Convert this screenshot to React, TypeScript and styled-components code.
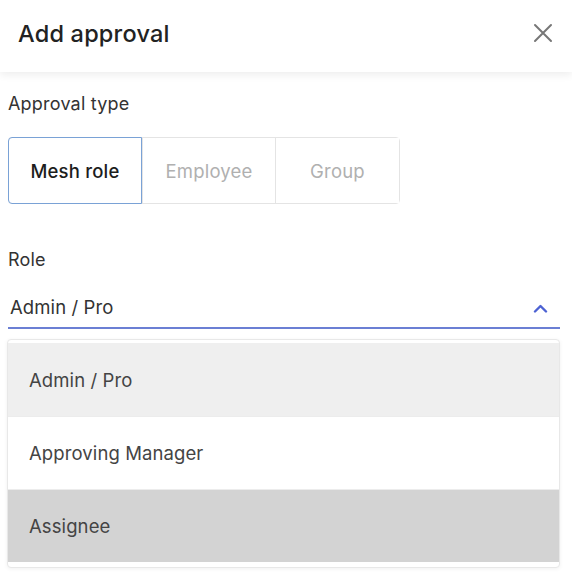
import React, { useState } from "react";
import styled, { createGlobalStyle } from "styled-components";

const GlobalStyle = createGlobalStyle`
  html, body {
    margin: 0;
    padding: 0;
    background: #ffffff;
    font-family: Inter, "Noto Sans", "Liberation Sans", sans-serif;
  }
`;

const Dialog = styled.div`
  width: 572px;
  height: 574px;
  overflow: hidden;
  background: #fff;
`;

const Header = styled.header`
  height: 72px;
  padding: 0 18px 6px 18px;
  box-sizing: border-box;
  display: flex;
  align-items: center;
  justify-content: space-between;
  box-shadow: 0 3px 8px rgba(0, 0, 0, 0.07);
  position: relative;
  z-index: 1;
`;

const Title = styled.h1`
  margin: 0;
  font-size: 23.5px;
  font-weight: 500;
  color: #222;
  letter-spacing: 0.2px;
`;

const CloseButton = styled.button`
  border: none;
  background: transparent;
  padding: 0;
  width: 22px;
  height: 22px;
  display: flex;
  align-items: center;
  justify-content: center;
  color: #777;
  cursor: pointer;
`;

const Body = styled.div`
  padding: 21px 12px 0 8px;
`;

const Label = styled.div`
  font-size: 18px;
  line-height: 22px;
  color: #333;
  letter-spacing: 0.2px;
`;

const Segments = styled.div`
  margin-top: 22px;
  width: 392px;
  height: 67px;
  display: grid;
  grid-template-columns: 133px 133px 1fr;
  border: 1px solid #e4e4e4;
  border-radius: 4px;
  box-sizing: border-box;
`;

const Segment = styled.button<{ $active?: boolean }>`
  font-family: inherit;
  font-size: 18.5px;
  letter-spacing: 0.2px;
  font-weight: ${(p) => (p.$active ? 500 : 400)};
  color: ${(p) => (p.$active ? "#1d1d1d" : "#b0b0b0")};
  background: #fff;
  border: none;
  border-left: 1px solid #e4e4e4;
  margin: ${(p) => (p.$active ? "-1px 0 -1px -1px" : "0")};
  cursor: pointer;
  &:first-child {
    border-left: none;
  }
  ${(p) =>
    p.$active &&
    `
    border: 1px solid #7aa2d6 !important;
    border-radius: 4px 0 0 4px;
  `}
`;

const RoleLabel = styled(Label)`
  margin-top: 45px;
`;

const SelectField = styled.div`
  margin-top: 20px;
  height: 38px;
  display: flex;
  align-items: flex-start;
  justify-content: space-between;
  border-bottom: 2px solid #6b7fd4;
  padding: 3px 12px 0 2px;
  box-sizing: border-box;
  font-size: 18.5px;
  letter-spacing: 0.1px;
  color: #333;
  line-height: 26px;
`;

const Chevron = styled.span`
  color: #4d62d3;
  display: flex;
  align-items: center;
  height: 28px;
`;

const Menu = styled.ul`
  list-style: none;
  margin: 10px 0 0 -1px;
  padding: 3px 0 5px;
  border: 1px solid #e8e8e8;
  border-radius: 4px;
  box-shadow: 0 1px 4px rgba(0, 0, 0, 0.06);
  background: #fff;
`;

const Option = styled.li<{ $tone: "selected" | "plain" | "hover" }>`
  height: 73px;
  box-sizing: border-box;
  display: flex;
  align-items: center;
  padding-left: 21px;
  font-size: 18.5px;
  letter-spacing: 0.1px;
  color: #444;
  border-top: 1px solid #ececec;
  background: ${(p) =>
    p.$tone === "selected" ? "#efefef" : p.$tone === "hover" ? "#d3d3d3" : "#fff"};
  &:first-child {
    border-top: none;
  }
`;

const types = ["Mesh role", "Employee", "Group"];
const roles = ["Admin / Pro", "Approving Manager", "Assignee"];

export default function App() {
  const [type, setType] = useState("Mesh role");
  const [role, setRole] = useState("Admin / Pro");
  const hovered = "Assignee";

  return (
    <Dialog>
      <GlobalStyle />
      <Header>
        <Title>Add approval</Title>
        <CloseButton aria-label="Close">
          <svg width="20" height="20" viewBox="0 0 20 20" fill="none">
            <path d="M2 2L18 18M18 2L2 18" stroke="currentColor" strokeWidth="2" strokeLinecap="round" />
          </svg>
        </CloseButton>
      </Header>
      <Body>
        <Label>Approval type</Label>
        <Segments>
          {types.map((t) => (
            <Segment key={t} $active={t === type} onClick={() => setType(t)}>
              {t}
            </Segment>
          ))}
        </Segments>
        <RoleLabel>Role</RoleLabel>
        <SelectField>
          <span>{role}</span>
          <Chevron>
            <svg width="15" height="9" viewBox="0 0 15 9" fill="none">
              <path d="M2 7.5L7.5 2L13 7.5" stroke="currentColor" strokeWidth="2.4" strokeLinecap="round" strokeLinejoin="round" />
            </svg>
          </Chevron>
        </SelectField>
        <Menu>
          {roles.map((r) => (
            <Option
              key={r}
              $tone={r === role ? "selected" : r === hovered ? "hover" : "plain"}
              onClick={() => setRole(r)}
            >
              {r}
            </Option>
          ))}
        </Menu>
      </Body>
    </Dialog>
  );
}
